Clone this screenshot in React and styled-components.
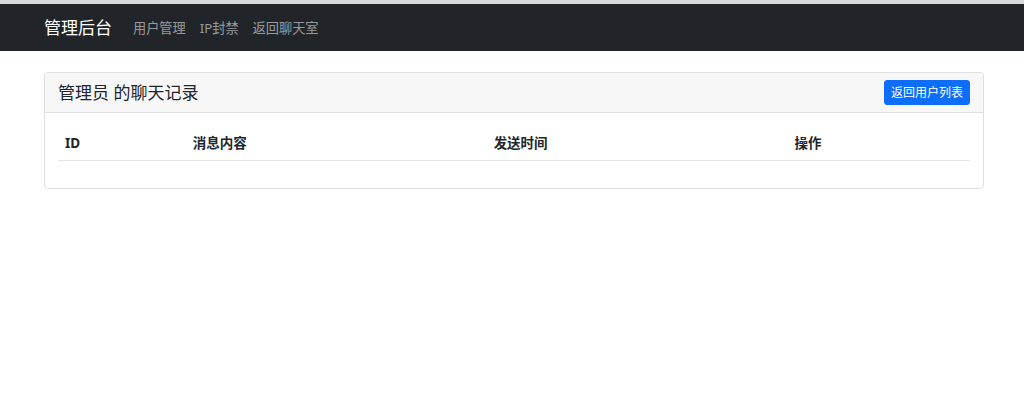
import React from "react";
import styled, { createGlobalStyle } from "styled-components";

const Global = createGlobalStyle`
  html, body { margin: 0; padding: 0; background: #fff; }
  body {
    font-family: "Noto Sans", "Noto Sans CJK SC", sans-serif;
    color: #212529;
    font-size: 14px;
  }
`;

const TopEdge = styled.div`
  height: 4px;
  background: #d9dadc;
`;

const Navbar = styled.nav`
  background: #212529;
  height: 47px;
  display: flex;
  align-items: center;
`;

const Container = styled.div`
  width: 944px;
  margin: 0 auto;
  padding-left: 4px;
  box-sizing: border-box;
`;

const NavInner = styled(Container)`
  display: flex;
  align-items: center;
`;

const Brand = styled.a`
  color: #fff;
  font-size: 17px;
  line-height: 26px;
  margin-right: 14px;
  text-decoration: none;
`;

const NavLinks = styled.div`
  display: flex;
  align-items: center;
`;

const NavLink = styled.a`
  color: rgba(255, 255, 255, 0.55);
  font-size: 13.2px;
  line-height: 20px;
  padding: 0 7px;
  text-decoration: none;
`;

const Main = styled(Container)`
  padding-top: 21px;
`;

const Card = styled.div`
  border: 1px solid #dfdfdf;
  border-radius: 4px;
  background: #fff;
`;

const CardHeader = styled.div`
  background: #f7f7f7;
  border-bottom: 1px solid #dfdfdf;
  padding: 7px 13px;
  display: flex;
  align-items: center;
  justify-content: space-between;
  border-radius: 4px 4px 0 0;
`;

const Title = styled.h5`
  margin: 0;
  font-size: 17px;
  font-weight: 400;
  line-height: 25px;
  color: #212529;
`;

const Button = styled.button`
  background: #0d6efd;
  color: #fff;
  border: 1px solid #0d6efd;
  border-radius: 3px;
  font-family: inherit;
  font-size: 12px;
  line-height: 15px;
  padding: 4px 6px;
  height: 25px;
  cursor: pointer;
`;

const CardBody = styled.div`
  padding: 14px 13px;
`;

const Table = styled.table`
  width: 100%;
  border-collapse: collapse;
  margin-bottom: 13px;
`;

const Th = styled.th`
  text-align: left;
  font-weight: 700;
  font-size: 13.5px;
  line-height: 19px;
  padding: 7px;
  border-bottom: 1px solid #e3e5e8;
  color: #212529;
  width: ${(p) => p.$w};
`;

export default function App() {
  return (
    <>
      <Global />
      <TopEdge />
      <Navbar>
        <NavInner>
          <Brand href="#">管理后台</Brand>
          <NavLinks>
            <NavLink href="#">用户管理</NavLink>
            <NavLink href="#">IP封禁</NavLink>
            <NavLink href="#">返回聊天室</NavLink>
          </NavLinks>
        </NavInner>
      </Navbar>
      <Main>
        <Card>
          <CardHeader>
            <Title>管理员 的聊天记录</Title>
            <Button>返回用户列表</Button>
          </CardHeader>
          <CardBody>
            <Table>
              <thead>
                <tr>
                  <Th $w="14%">ID</Th>
                  <Th $w="33%">消息内容</Th>
                  <Th $w="33%">发送时间</Th>
                  <Th $w="20%">操作</Th>
                </tr>
              </thead>
              <tbody></tbody>
            </Table>
          </CardBody>
        </Card>
      </Main>
    </>
  );
}
